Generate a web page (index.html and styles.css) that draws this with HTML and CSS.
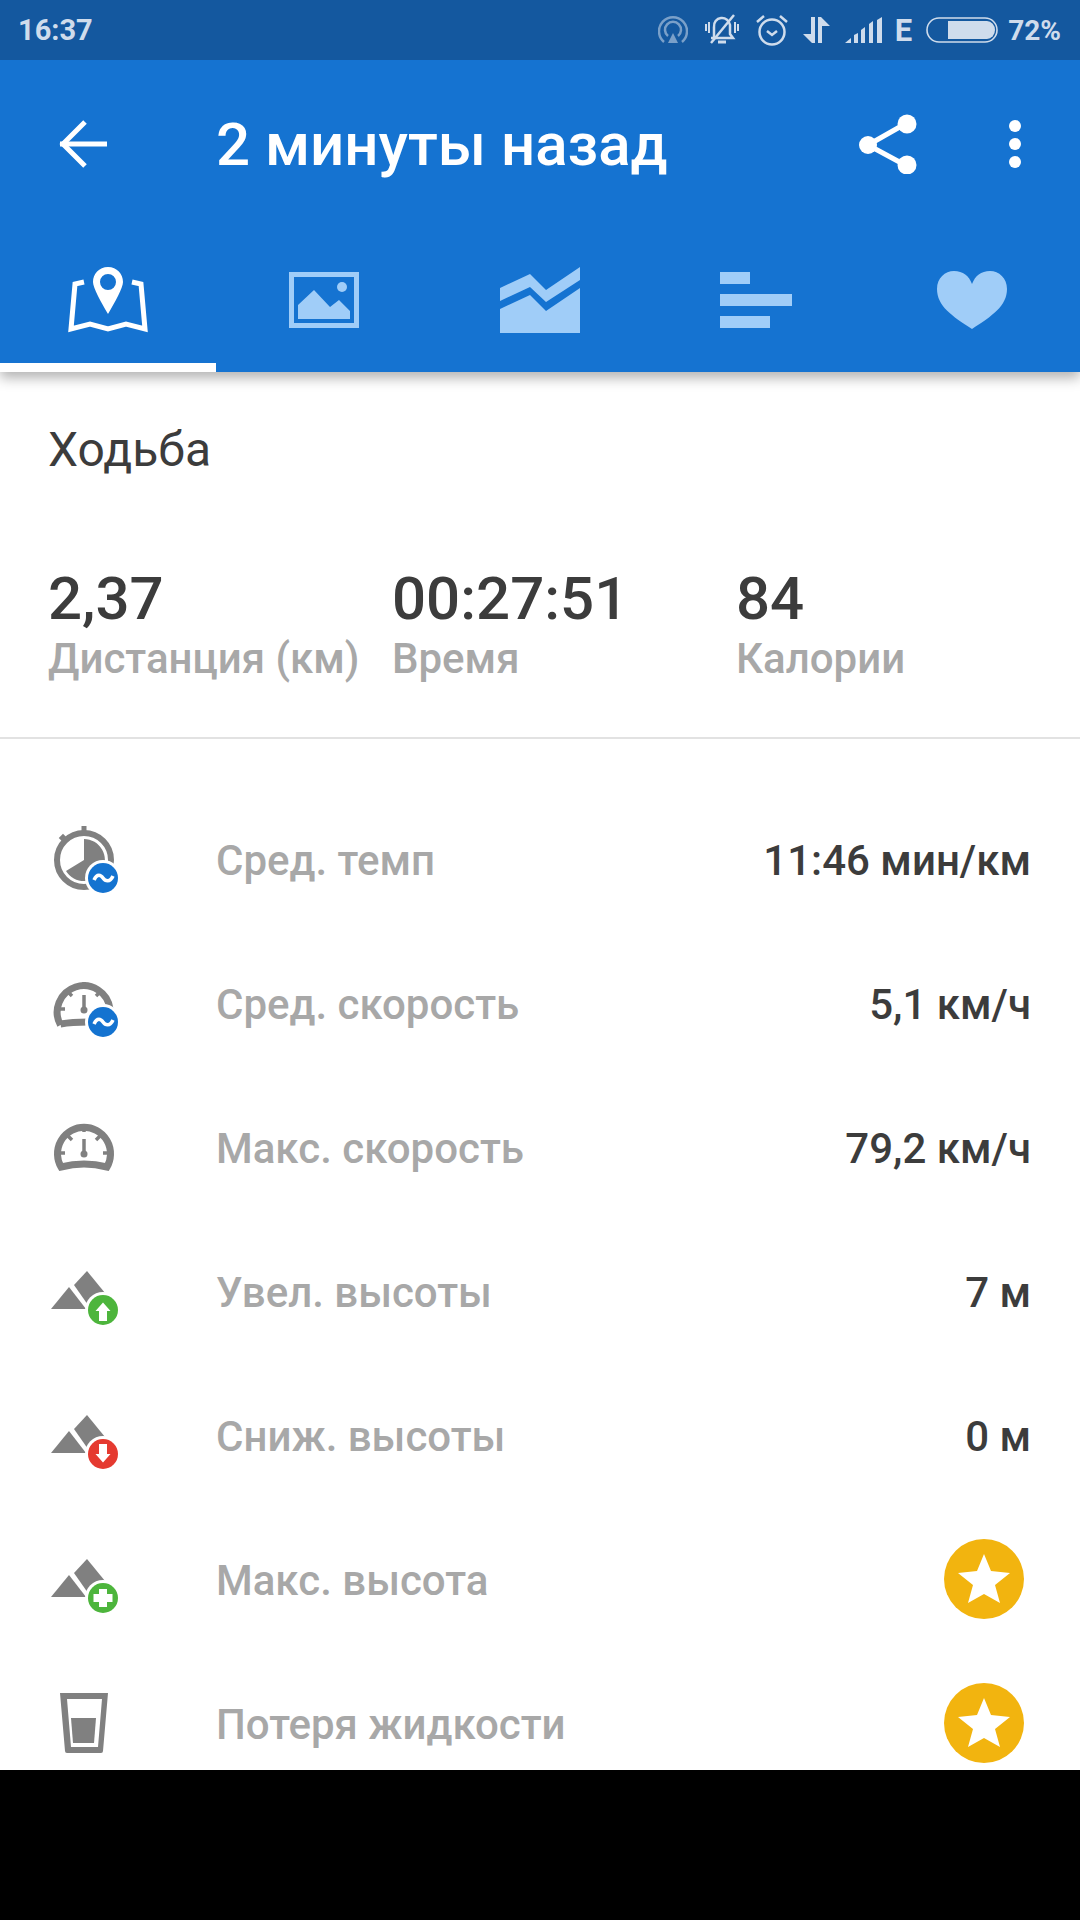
FILE: index.html
```html
<!DOCTYPE html>
<html lang="en">
<head>
  <meta charset="UTF-8">
  <meta name="viewport" content="width=device-width, initial-scale=1.0">
  <title>2 минуты назад</title>
  <link rel="stylesheet" href="styles.css">
</head>
<body>
  <div class="screen">
    <header class="header">
      <!-- status bar -->
      <div class="status">
        <span class="time">16:37</span>
        <div class="status-icons">
          <svg class="ic-hotspot" width="30" height="32" viewBox="0 0 30 32" fill="none" stroke="#cfdcec">
            <path d="M6 28A14 14 0 1 1 24 28" stroke-width="2.5"/>
            <path d="M10 22A8 8 0 1 1 20 22" stroke-width="2.5"/>
            <path d="M15 19L20 29H10Z" fill="#cfdcec" stroke="none"/>
          </svg>
          <svg class="ic-bell" width="34" height="32" viewBox="0 0 34 32" fill="none" stroke="#cfdcec" stroke-width="2.5">
            <path d="M9 24V13A8 8 0 0 1 25 11V20L28 24H6"/>
            <path d="M13 28H21" stroke-width="3"/>
            <path d="M1 10V17M4 8V19M30 8V19M33 10V17" stroke-width="2"/>
            <path d="M6 29L29 1"/>
          </svg>
          <svg class="ic-alarm" width="32" height="32" viewBox="0 0 32 32" fill="none" stroke="#cfdcec" stroke-width="2.5">
            <circle cx="16" cy="18" r="12.5"/>
            <path d="M11 17L16 21L21 17"/>
            <path d="M1 8L8 2M24 2L31 8"/>
          </svg>
          <svg class="ic-arrows" width="27" height="28" viewBox="0 0 27 28" fill="#cfdcec">
            <path d="M8 1H12V27H9L0 18H8Z"/>
            <path d="M15 1H18L27 10H19V27H15Z"/>
          </svg>
          <svg class="ic-signal" width="37" height="26" viewBox="0 0 37 26" fill="#cfdcec">
            <path d="M0 26L6 21V26Z"/>
            <path d="M9 26V18L13 16V26Z"/>
            <path d="M16 26V13L20 10V26Z"/>
            <path d="M24 26V7L28 4V26Z"/>
            <path d="M32 26V3L37 0V26Z"/>
          </svg>
          <span class="net">E</span>
          <svg class="ic-battery" width="72" height="26" viewBox="0 0 72 26">
            <rect x="1" y="1" width="70" height="24" rx="12" fill="none" stroke="#cfdcec" stroke-width="1.6"/>
            <path d="M22 4H61A8 9 0 0 1 69 13A8 9 0 0 1 61 22H22Z" fill="#cfdcec"/>
          </svg>
          <span class="pct">72%</span>
        </div>
      </div>

      <div class="toolbar">
        <svg class="back" width="50" height="48" viewBox="0 0 50 48" fill="none" stroke="#fff" stroke-width="5">
          <path d="M1 24H48"/>
          <path d="M26 2L4 24L26 46"/>
        </svg>
        <h1 class="title">2 минуты назад</h1>
        <svg class="share" width="60" height="60" viewBox="0 0 60 60" fill="#fff">
          <path d="M10 31L47 10M10 31L47 51" stroke="#fff" stroke-width="5"/>
          <circle cx="10" cy="31" r="9"/>
          <circle cx="49" cy="10" r="9.5"/>
          <circle cx="49" cy="51" r="9.5"/>
        </svg>
        <div class="dots"><i></i><i></i><i></i></div>
      </div>

      <!-- tabs -->
      <nav class="tabs">
        <div class="tab active">
          <svg width="100" height="72" viewBox="0 0 100 72">
            <path d="M26 18L17 20L13 65L32 60L50 65L68 60L87 65L83 20L74 18" fill="none" stroke="#fff" stroke-width="5"/>
            <path fill-rule="evenodd" fill="#fff" d="M50 3C59 3 65 10 65 18C65 24 57 38 50 50C43 38 35 24 35 18C35 10 41 3 50 3ZM50 10A8 8 0 1 0 50 26A8 8 0 1 0 50 10Z"/>
          </svg>
        </div>
        <div class="tab">
          <svg width="100" height="72" viewBox="0 0 100 72" fill="#a0cdf8">
            <path fill-rule="evenodd" d="M15 8H85V64H15ZM20 13V59H80V13Z"/>
            <path d="M24 55V41L40 26L56 43L65 36L76 47V55Z"/>
            <ellipse cx="68" cy="23" rx="5" ry="5"/>
          </svg>
        </div>
        <div class="tab">
          <svg width="100" height="72" viewBox="0 0 100 72" fill="#a0cdf8">
            <path d="M10 24L40 10L56 26L90 3V16L56 38L40 23L10 37Z"/>
            <path d="M10 45L40 31L56 47L90 24V69H10Z"/>
          </svg>
        </div>
        <div class="tab">
          <svg width="100" height="72" viewBox="0 0 100 72" fill="#a0cdf8">
            <rect x="14" y="8" width="30" height="12"/>
            <rect x="14" y="30" width="72" height="12"/>
            <rect x="14" y="52" width="50" height="12"/>
          </svg>
        </div>
        <div class="tab">
          <svg width="100" height="72" viewBox="0 0 100 72" fill="#a0cdf8">
            <path d="M50 65C30 52 15 42 15 25C15 14 23 7 32 7C41 7 47 12 50 20C53 12 59 7 68 7C77 7 85 14 85 25C85 42 70 52 50 65Z"/>
          </svg>
        </div>
      </nav>
    </header>

    <section class="summary">
      <div class="sport">Ходьба</div>
      <div class="stats">
        <div class="stat">
          <div class="stat-value">2,37</div>
          <div class="stat-label">Дистанция (км)</div>
        </div>
        <div class="stat">
          <div class="stat-value">00:27:51</div>
          <div class="stat-label">Время</div>
        </div>
        <div class="stat">
          <div class="stat-value">84</div>
          <div class="stat-label">Калории</div>
        </div>
      </div>
    </section>

    <section class="rows">
      <div class="row">
        <svg class="row-icon" width="80" height="80" viewBox="0 0 80 80">
          <circle cx="36" cy="41" r="27" fill="none" stroke="#808080" stroke-width="6"/>
          <rect x="33.500" y="7" width="5" height="6" fill="#808080"/>
          <rect x="12" y="16" width="6" height="6" fill="#808080" transform="rotate(-45 15 19)"/>
          <path d="M36 41V20A21 21 0 1 1 18 52Z" fill="#808080"/>
          <circle cx="55" cy="59" r="18" fill="#fff"/>
          <circle cx="55" cy="59" r="15" fill="#1473d0"/>
          <path d="M46 61C49 54 53 56 55 59C57 62 62 64 65 57" fill="none" stroke="#fff" stroke-width="3.5"/>
        </svg>
        <span class="row-label">Сред. темп</span>
        <span class="row-value">11:46 мин/км</span>
      </div>
      <div class="row">
        <svg class="row-icon" width="80" height="80" viewBox="0 0 80 80">
          <path d="M12.500 62A26.500 26.500 0 1 1 62 46M12.500 61Q24 59 40 59" fill="none" stroke="#808080" stroke-width="7"/>
          <path d="M36 19V25M20 29L24 33M52 29L48 33M11 46H17M55 46H61" stroke="#808080" stroke-width="3.5"/>
          <path d="M36 32V46" stroke="#808080" stroke-width="3.5"/>
          <circle cx="36" cy="47" r="3.500" fill="#808080"/>
          <circle cx="55" cy="59" r="18" fill="#fff"/>
          <circle cx="55" cy="59" r="15" fill="#1473d0"/>
          <path d="M46 61C49 54 53 56 55 59C57 62 62 64 65 57" fill="none" stroke="#fff" stroke-width="3.5"/>
        </svg>
        <span class="row-label">Сред. скорость</span>
        <span class="row-value">5,1 км/ч</span>
      </div>
      <div class="row">
        <svg class="row-icon" width="80" height="80" viewBox="0 0 80 80">
          <path d="M13 60A26.500 26.500 0 1 1 59 60Q36 54 13 60Z" fill="none" stroke="#808080" stroke-width="7"/>
          <path d="M36 19V25M20 29L24 33M52 29L48 33M11 46H17M55 46H61" stroke="#808080" stroke-width="3.5"/>
          <path d="M36 32V46" stroke="#808080" stroke-width="3.5"/>
          <circle cx="36" cy="47" r="3.500" fill="#808080"/>
        </svg>
        <span class="row-label">Макс. скорость</span>
        <span class="row-value">79,2 км/ч</span>
      </div>
      <div class="row">
        <svg class="row-icon" width="80" height="80" viewBox="0 0 80 80">
          <path d="M21 36L3 58H38Z" fill="#808080"/>
          <path d="M39 20L57 42L40 54L26 34Z" fill="#808080"/>
          <circle cx="55" cy="59" r="18" fill="#fff"/>
          <circle cx="55" cy="59" r="15" fill="#4db53c"/>
          <path d="M55 51.5L62.5 60H59V70H51V60H47.5Z" fill="#fff"/>
        </svg>
        <span class="row-label">Увел. высоты</span>
        <span class="row-value">7 м</span>
      </div>
      <div class="row">
        <svg class="row-icon" width="80" height="80" viewBox="0 0 80 80">
          <path d="M21 36L3 58H38Z" fill="#808080"/>
          <path d="M39 20L57 42L40 54L26 34Z" fill="#808080"/>
          <circle cx="55" cy="59" r="18" fill="#fff"/>
          <circle cx="55" cy="59" r="15" fill="#e53a30"/>
          <path d="M55 67.5L62.5 59H59V49H51V59H47.5Z" fill="#fff"/>
        </svg>
        <span class="row-label">Сниж. высоты</span>
        <span class="row-value">0 м</span>
      </div>
      <div class="row">
        <svg class="row-icon" width="80" height="80" viewBox="0 0 80 80">
          <path d="M21 36L3 58H38Z" fill="#808080"/>
          <path d="M39 20L57 42L40 54L26 34Z" fill="#808080"/>
          <circle cx="55" cy="59" r="18" fill="#fff"/>
          <circle cx="55" cy="59" r="15" fill="#4db53c"/>
          <path d="M51 50H59V55H64.500V63H59V68H51V63H45.500V55H51Z" fill="#fff"/>
        </svg>
        <span class="row-label">Макс. высота</span>
        <svg class="star" width="80" height="80" viewBox="0 0 80 80">
          <circle cx="40" cy="40" r="40" fill="#f2b40f"/>
          <path d="M40 15L47 32L66 34L51 46L56 64L40 55L24 64L29 46L14 34L33 32Z" fill="#fff"/>
        </svg>
      </div>
      <div class="row">
        <svg class="row-icon" width="80" height="80" viewBox="0 0 80 80">
          <path fill-rule="evenodd" fill="#808080" d="M12 10H60L55 68Q55 70 53 70H19Q17 70 17 68ZM19 16L23 64H50L54 16Z"/>
          <path d="M23 35H48L46 60H25Z" fill="#808080"/>
        </svg>
        <span class="row-label">Потеря жидкости</span>
        <svg class="star" width="80" height="80" viewBox="0 0 80 80">
          <circle cx="40" cy="40" r="40" fill="#f2b40f"/>
          <path d="M40 15L47 32L66 34L51 46L56 64L40 55L24 64L29 46L14 34L33 32Z" fill="#fff"/>
        </svg>
      </div>
    </section>
  </div>
</body>
</html>
```

FILE: styles.css
```css
* {
  margin: 0;
  padding: 0;
  box-sizing: border-box;
}

body {
  width: 1080px;
  height: 1920px;
  background: #000;
  font-family: Roboto, sans-serif;
  overflow: hidden;
}

.screen {
  height: 1770px;
  background: #fff;
  overflow: hidden;
}

/* Header */
.header {
  position: relative;
  z-index: 1;
  background: #1573d1;
  box-shadow: 0 6px 12px rgba(0, 0, 0, 0.3);
}

.status {
  height: 60px;
  background: #14589f;
  color: #cfdcec;
  display: flex;
  align-items: center;
  justify-content: space-between;
  padding: 0 19px 0 18px;
  font-size: 29px;
  font-weight: 700;
}

.status-icons {
  display: flex;
  align-items: center;
}

.ic-hotspot { opacity: 0.55; }
.ic-bell { margin-left: 17px; }
.ic-alarm { margin-left: 17px; }
.ic-arrows { margin-left: 15px; }
.ic-signal { margin-left: 15px; }
.net { margin-left: 13px; font-size: 31px; }
.ic-battery { margin-left: 14px; }
.pct { margin-left: 10px; font-size: 28px; }

.toolbar {
  height: 168px;
  display: flex;
  align-items: center;
  padding-left: 59px;
}

.title {
  font-size: 60px;
  font-weight: 500;
  color: #fff;
  margin-left: 107px;
  width: 642px;
}

.share {
  flex: none;
}

.dots {
  margin-left: 91px;
  display: flex;
  flex-direction: column;
  gap: 6px;
}

.dots i {
  width: 12px;
  height: 12px;
  border-radius: 50%;
  background: #fff;
}

.tabs {
  display: flex;
  height: 144px;
}

.tab {
  flex: 1;
  padding-top: 36px;
  text-align: center;
}

.tab.active {
  border-bottom: 9px solid #fff;
}

.tab svg {
  display: block;
  margin: 0 auto;
}

/* Summary */
.summary {
  padding: 53px 0 50px 48px;
  border-bottom: 2px solid #e2e2e2;
}

.sport {
  font-size: 48px;
  line-height: 50px;
  color: #3c3c3c;
}

.stats {
  display: grid;
  grid-template-columns: 344px 344px auto;
  margin-top: 92px;
}

.stat-value {
  font-size: 60px;
  line-height: 64px;
  font-weight: 500;
  color: #3c3c3c;
}

.stat-label {
  font-size: 42px;
  line-height: 56px;
  font-weight: 500;
  color: #a8a8a8;
}

/* Rows */
.rows {
  padding-top: 48px;
}

.row {
  height: 144px;
  display: flex;
  align-items: center;
  padding: 0 49px 0 48px;
}

.row-icon {
  flex: none;
  margin-right: 88px;
}

.row-label {
  flex: 1;
  font-size: 42px;
  font-weight: 500;
  color: #a8a8a8;
  padding-top: 2px;
}

.row-value {
  font-size: 42px;
  font-weight: 500;
  color: #3c3c3c;
  padding-top: 2px;
}

.star {
  flex: none;
  margin-right: 7px;
}
```
